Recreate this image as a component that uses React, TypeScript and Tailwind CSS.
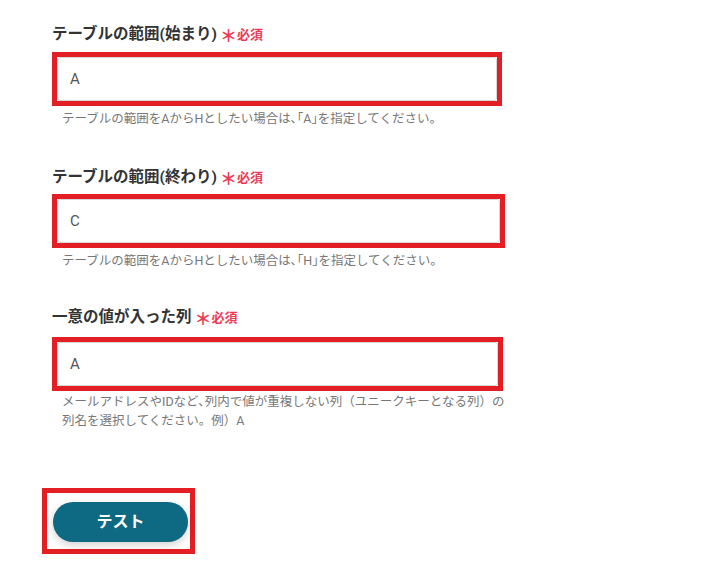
import React from "react";

const font = { fontFamily: 'Roboto, "Noto Sans CJK JP", "Noto Sans", sans-serif' };

function Label({ text, mt }: { text: string; mt: string }) {
  return (
    <div className={`flex items-center h-[22px] ${mt}`}>
      <span className="text-[15.5px] font-bold text-[#333333]">{text}</span>
      <span className="ml-[3px] text-[17px] font-bold text-[#ee3b55] leading-none mt-[3px]">＊</span>
      <span className="text-[13px] font-bold text-[#ee3b55]">必須</span>
    </div>
  );
}

function Box({ value, w, mt }: { value: string; w: string; mt: string }) {
  return (
    <div className={`${w} h-[54px] border-[5px] border-[#e31e24] ${mt}`}>
      <div className="w-full h-full bg-white border border-[#d6d6d6] rounded-[3px] flex items-center pl-[12px] text-[15px] text-[#555555]">
        {value}
      </div>
    </div>
  );
}

export default function App() {
  return (
    <div className="w-[702px] h-[580px] bg-white pl-[52px] pt-[24px]" style={font}>
      <Label text="テーブルの範囲(始まり)" mt="" />
      <Box value="A" w="w-[450px]" mt="mt-[6px]" />
      <p className="ml-[10px] mt-[3px] text-[12.5px] leading-[19px] text-[#777777]">
        テーブルの範囲をAからHとしたい場合は､｢A｣を指定してください。
      </p>

      <Label text="テーブルの範囲(終わり)" mt="mt-[39px]" />
      <Box value="C" w="w-[453px]" mt="mt-[5px]" />
      <p className="ml-[10px] mt-[3px] text-[12.5px] leading-[19px] text-[#777777]">
        テーブルの範囲をAからHとしたい場合は､｢H｣を指定してください。
      </p>

      <Label text="一意の値が入った列" mt="mt-[37px]" />
      <Box value="A" w="w-[451px]" mt="mt-[8px]" />
      <p className="ml-[10px] mt-[1px] w-[446px] text-[12.5px] leading-[19px] text-[#777777]">
        メールアドレスやIDなど､列内で値が重複しない列（ユニークキーとなる列）の
        <br />
        列名を選択してください。例）A
      </p>

      <div className="-ml-[10px] mt-[58px] w-[153px] h-[66px] border-[5px] border-[#e31e24] pl-[6px] pt-[9px]">
        <button className="w-[135px] h-[40px] rounded-full bg-[#0d6a82] text-white text-[16px] font-bold shadow-[0_3px_8px_rgba(0,0,0,0.18)]">
          テスト
        </button>
      </div>
    </div>
  );
}
